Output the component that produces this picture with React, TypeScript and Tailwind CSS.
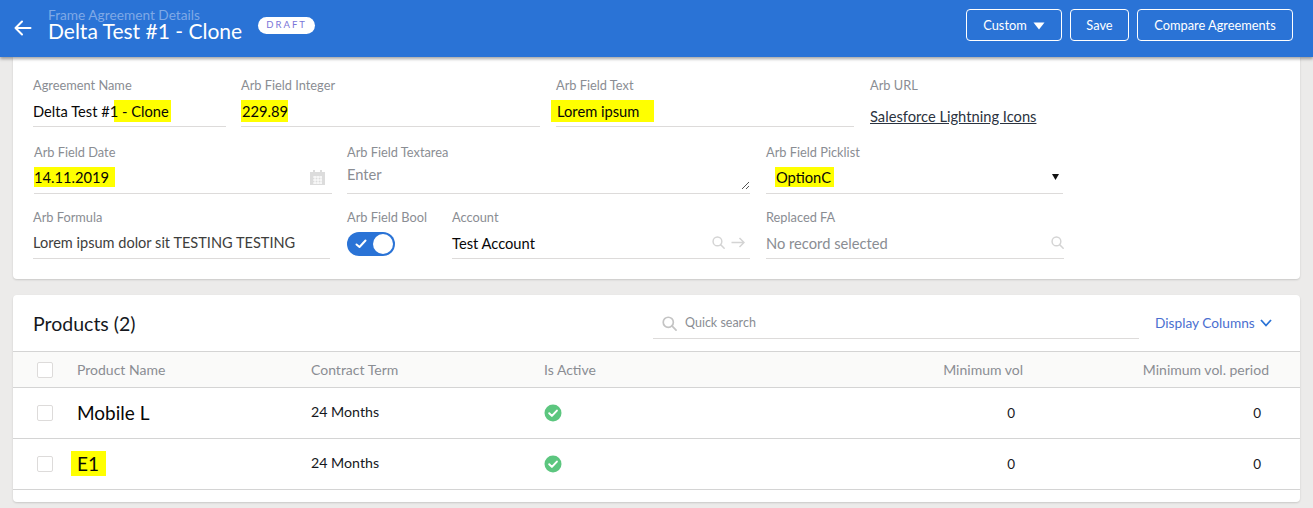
import React from "react";

const Label = ({ children, className = "" }: { children: React.ReactNode; className?: string }) => (
  <div className={`h-[16px] text-[12.8px] leading-[14px] text-[#8a8d93] ${className}`}>{children}</div>
);

const Mark = ({ children, className = "" }: { children: React.ReactNode; className?: string }) => (
  <span className={`bg-[#ffff00] ${className}`}>{children}</span>
);

const Field = ({ label, className = "", children, line = true }: { label: string; className?: string; children: React.ReactNode; line?: boolean }) => (
  <div className={`flex h-[49px] shrink-0 flex-col ${className}`}>
    <Label>{label}</Label>
    <div className={`flex flex-1 items-center justify-between text-[14.7px] leading-[20px] ${line ? "border-b border-[#dddbda]" : ""}`}>{children}</div>
  </div>
);

const Search = ({ size = 13, color = "#d4d4d4" }: { size?: number; color?: string }) => (
  <svg width={size} height={size} viewBox="0 0 16 16" fill="none" stroke={color} strokeWidth="1.8" strokeLinecap="round">
    <circle cx="6.7" cy="6.7" r="5.4" />
    <path d="M10.6 10.6 L15 15" />
  </svg>
);

const Check = () => (
  <svg width="18" height="18" viewBox="0 0 18 18">
    <circle cx="9" cy="9" r="8.5" fill="#5cc67f" />
    <path d="M5.2 9.3 L7.9 11.9 L12.9 6.6" fill="none" stroke="#fff" strokeWidth="2" strokeLinecap="round" strokeLinejoin="round" />
  </svg>
);

const Box = ({ className = "" }: { className?: string }) => (
  <div className={`h-[16px] w-[16px] rounded-[2px] border border-[#dddbda] bg-white ${className}`} />
);

const rowGrid = "grid grid-cols-[64px_234px_233px_233px_246px_246px] items-center";

export default function App() {
  return (
    <div className="h-[508px] w-[1313px] overflow-hidden bg-[#ecebea] font-['Lato','Noto_Sans',sans-serif] text-[#080707]">
      <header className="relative z-10 flex h-[57px] items-center bg-[#2a73d6] pl-[14px] pr-[20px] shadow-[0_2px_3px_rgba(0,0,0,0.35)]">
        <svg className="mb-[1px]" width="18" height="18" viewBox="0 0 18 18" fill="none" stroke="#fff" strokeWidth="2" strokeLinecap="round" strokeLinejoin="round">
          <path d="M1.5 9 H16.5 M8 2.5 L1.5 9 L8 15.5" />
        </svg>
        <div className="ml-[16px] flex h-full flex-col pt-[8px]">
          <div className="h-[13px] whitespace-nowrap text-[13.7px] leading-[14px] text-[#7fa9e6]">Frame Agreement Details</div>
          <div className="whitespace-nowrap text-[21px] leading-[20px] text-white">Delta Test #1 - Clone</div>
        </div>
        <div className="mb-[7px] ml-[16px] flex h-[17px] w-[57px] items-center justify-center rounded-full bg-white text-[9.5px] tracking-[2px] text-[#7a75d8]">DRAFT</div>
        <div className="mb-[7px] ml-auto flex gap-[8px] text-[12.8px] text-white">
          <button className="flex h-[32px] w-[96px] items-center justify-center gap-[6px] rounded-[4px] border border-white pt-px">
            Custom
            <svg width="12" height="8" viewBox="0 0 12 8"><path d="M0.5 0.5 H11.5 L6 7.5 Z" fill="#fff" /></svg>
          </button>
          <button className="h-[32px] w-[59px] rounded-[4px] border border-white pt-px">Save</button>
          <button className="h-[32px] w-[156px] rounded-[4px] border border-white pt-px">Compare Agreements</button>
        </div>
      </header>

      <main className="flex flex-col gap-[16px] px-[13px]">
        <section className="rounded-b-[4px] bg-white px-[20px] pb-[20px] pt-[21px] shadow-[0_1px_2px_rgba(0,0,0,0.15)]">
          <div className="flex gap-[15px]">
            <Field label="Agreement Name" className="w-[193px]"><span className="mt-[1px]">Delta Test #<span className="bg-[linear-gradient(90deg,transparent_50%,#ffff00_50%)] py-[2px]">1</span><Mark className="py-[2px] pr-[2px]"> - Clone</Mark></span></Field>
            <Field label="Arb Field Integer" className="w-[299px]"><span className="mt-[1px]"><Mark className="py-[2px] pl-px">229.89</Mark></span></Field>
            <Field label="Arb Field Text" className="ml-px w-[298px]"><span className="-ml-[5px] mt-[1px]"><Mark className="py-[2px] pl-[6px] pr-[15px]">Lorem ipsum</Mark></span></Field>
            <Field label="Arb URL" className="ml-px w-[300px]" line={false}><span className="mt-[10px] text-[#2b3340] underline">Salesforce Lightning Icons</span></Field>
          </div>
          <div className="mt-[18px] flex gap-[15px]">
            <Field label="Arb Field Date" className="ml-px w-[298px]">
              <span><Mark className="py-px pr-[6px]">14.11.2019</Mark></span>
              <svg className="mr-[7px]" width="15" height="16" viewBox="0 0 15 16" fill="#dcdcdc"><path d="M0 3 H3 V1 H5 V3 H10 V1 H12 V3 H15 V16 H0 Z" /><path d="M3 8 H12 M3 11 H12 M3 14 H12 M5 7 V15 M8 7 V15 M11 7 V15" stroke="#fff" strokeWidth="1" /></svg>
            </Field>
            <Field label="Arb Field Textarea" className="w-[403px]">
              <span className="-mt-[7px] text-[#8a8d93]">Enter</span>
              <svg className="mt-[17px]" width="9" height="9" viewBox="0 0 9 9" stroke="#555" strokeWidth="1"><path d="M1 8 L8 1 M5 8 L8 5" /></svg>
            </Field>
            <Field label="Arb Field Picklist" className="ml-px w-[297px]">
              <span className="ml-[9px]"><Mark className="py-px pl-px pr-[3px]">OptionC</Mark></span>
              <svg className="mr-[4px]" width="7" height="6" viewBox="0 0 7 6"><path d="M0 0 H7 L3.5 6 Z" fill="#111" /></svg>
            </Field>
          </div>
          <div className="mt-[16px] flex">
            <Field label="Arb Formula" className="w-[297px]"><span className="mt-[1px] text-[14.55px] text-[#3e3e3c]">Lorem ipsum dolor sit TESTING TESTING</span></Field>
            <div className="ml-[17px] h-[49px] w-[105px] shrink-0">
              <Label>Arb Field Bool</Label>
              <div className="mt-[6px] flex h-[24px] w-[48px] items-center justify-between rounded-full bg-[#2a73d6] px-[2px]">
                <svg className="ml-[6px]" width="12" height="10" viewBox="0 0 12 10" fill="none" stroke="#fff" strokeWidth="2" strokeLinecap="round" strokeLinejoin="round"><path d="M1.5 5.5 L4.5 8 L10.5 1.5" /></svg>
                <div className="h-[20px] w-[20px] rounded-full bg-white" />
              </div>
            </div>
            <Field label="Account" className="w-[298px]">
              <span className="mt-[1px]">Test Account</span>
              <span className="mr-[5px] flex items-center gap-[6px]">
                <Search size={13} />
                <svg width="14" height="11" viewBox="0 0 14 11" fill="none" stroke="#d4d4d4" strokeWidth="1.5"><path d="M0.5 5.5 H13 M8.5 1 L13 5.5 L8.5 10" /></svg>
              </span>
            </Field>
            <Field label="Replaced FA" className="ml-[16px] w-[298px]">
              <span className="mt-[1px] text-[#8a8d93]">No record selected</span>
              <Search size={13} />
            </Field>
          </div>
        </section>

        <section className="h-[207px] rounded-[4px] bg-white shadow-[0_1px_2px_rgba(0,0,0,0.15)]">
          <div className="flex h-[57px] items-center border-b border-[#d4d4d4] px-[20px]">
            <div className="w-[620px] shrink-0 pt-px text-[19.5px] leading-[24px] text-[#16181d]">Products (2)</div>
            <div className="mt-[12px] flex h-[32px] w-[486px] shrink-0 items-center gap-[8px] self-start border-b border-[#dddbda] pl-[9px] pt-px">
              <Search size={15} color="#c4c4c4" />
              <span className="pt-px text-[12.5px] text-[#8a8d93]">Quick search</span>
            </div>
            <div className="ml-[16px] flex items-center gap-[5px] whitespace-nowrap text-[13.7px] text-[#4a6fd0]">
              Display Columns
              <svg width="12" height="8" viewBox="0 0 12 8" fill="none" stroke="#2a73d6" strokeWidth="1.8"><path d="M1 1 L6 6.5 L11 1" /></svg>
            </div>
          </div>
          <div className={`${rowGrid} h-[36px] border-b border-[#d4d4d4] bg-[#fafaf9] text-[14px] text-[#8a8d93]`}>
            <Box className="ml-[24px] bg-transparent" />
            <div>Product Name</div>
            <div>Contract Term</div>
            <div>Is Active</div>
            <div className="text-right">Minimum vol</div>
            <div className="text-right">Minimum vol. period</div>
          </div>
          {[<>Mobile L</>, <Mark key="e" className="-ml-[6px] py-[1px] pl-[6px] pr-[7px]">E1</Mark>].map((name, i) => (
            <div key={i} className={`${rowGrid} h-[51px] border-b border-[#d4d4d4] text-[14.2px] text-[#16181d]`}>
              <Box className="ml-[24px]" />
              <div className="text-[19px] leading-[24px] text-[#080707]">{name}</div>
              <div className="-mt-[2px]">24 Months</div>
              <div className="pb-px"><Check /></div>
              <div className="pr-[8px] text-right text-[13.5px]">0</div>
              <div className="pr-[8px] text-right text-[13.5px]">0</div>
            </div>
          ))}
        </section>
      </main>
    </div>
  );
}
